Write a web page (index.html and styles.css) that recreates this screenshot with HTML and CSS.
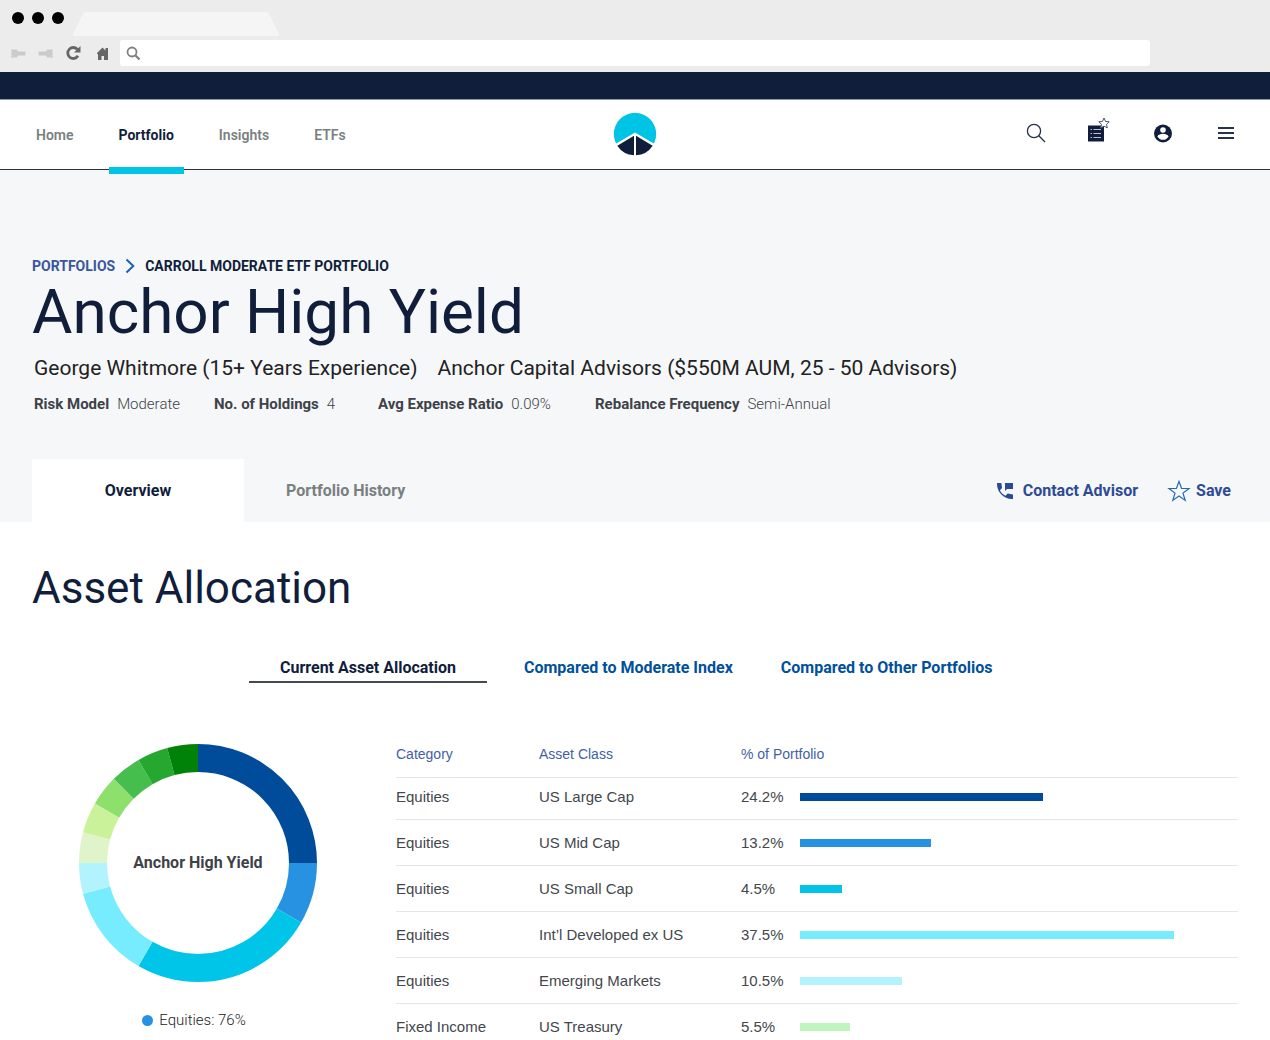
FILE: index.html
```
<!DOCTYPE html>
<html lang="en">
<head>
<meta charset="utf-8">
<meta name="viewport" content="width=device-width, initial-scale=1">
<title>Anchor High Yield</title>
<link rel="stylesheet" href="styles.css">
</head>
<body>
<div class="browser">
  <div class="browser-tabs">
    <div class="window-dots"><span></span><span></span><span></span></div>
    <div class="browser-tab"></div>
  </div>
  <div class="browser-toolbar">
    <div class="browser-buttons">
      <button type="button" aria-label="Back"><svg width="16" height="16" viewBox="0 0 16 16" fill="#cccbcb"><path d="M.5 9L2 7.500L.8 4.500H7l1 2H15.500v4H8l-1 2H.8L2 10z"/></svg></button>
      <button type="button" aria-label="Forward"><svg width="16" height="16" viewBox="0 0 16 16" fill="#cccbcb"><path d="M15.500 9L14 7.500l1.200-3H9l-1 2H.5v4H8l1 2h6.200L14 10z"/></svg></button>
      <button type="button" aria-label="Reload"><svg width="16" height="16" viewBox="0 0 16 16"><path d="M11.600 4.600A5.500 5.500 0 1 0 12 10.800" fill="none" stroke="#666" stroke-width="2.800"/><path d="M14.500 1v6.500H8z" fill="#666"/></svg></button>
      <button type="button" aria-label="Home page"><svg width="16" height="16" viewBox="0 0 16 16" fill="#666"><path d="M8.500 2.500L3 8v1h1v6h3.500v-4h2.500v4H14V3h-2.500v2.500z"/></svg></button>
    </div>
    <label class="address">
      <svg width="15" height="15" viewBox="0 0 15 15" fill="none" stroke="#808080"><circle cx="6" cy="6" r="4.500" stroke-width="1.800"/><path d="M9.300 9.300L13.500 13.500" stroke-width="2.200"/></svg>
      <input type="text" aria-label="Address">
    </label>
  </div>
</div>

<div class="top-strip"></div>
<header class="site-header">
  <nav class="main-nav" aria-label="Main">
    <a href="#">Home</a>
    <a href="#" class="active" aria-current="page">Portfolio</a>
    <a href="#">Insights</a>
    <a href="#">ETFs</a>
  </nav>
  <a href="#" class="logo" aria-label="Start">
    <svg width="44" height="44" viewBox="0 0 44 44"><circle cx="22" cy="22" r="21.200" fill="#00c4e6"/><path d="M1.500 32.500L22 20.500L42.500 32.500V44H1.500z" fill="#fff"/><path d="M21 23.800V43.200A21.200 21.200 0 0 1 4.300 33.700z" fill="#101e3b"/><path d="M23 23.800V43.200A21.200 21.200 0 0 0 39.700 33.700z" fill="#101e3b"/></svg>
  </a>
  <div class="header-tools">
    <button type="button" aria-label="Search"><svg width="24" height="24" viewBox="0 0 24 24" fill="none" stroke="#26324c" stroke-width="1.300"><circle cx="9" cy="10" r="6.600"/><path d="M13.800 14.800L20 21"/></svg></button>
    <button type="button" aria-label="Saved lists"><svg width="24" height="24" viewBox="0 0 24 24"><path fill="#101e3b" d="M0 4.500h16v16H0z"/><path stroke="#b9bfcb" stroke-width="1.200" d="M2.500 8.500H4M5.500 8.500H13M2.500 12.500H4M5.500 12.500H13M2.500 16.500H4M5.500 16.500H13"/><path fill="#fff" stroke="#4c566b" d="M16 -3l1.500 3.400 3.700.4-2.700 2.500.8 3.600L16 5.100l-3.300 1.800.8-3.600-2.700-2.500 3.700-.4z"/></svg></button>
    <button type="button" aria-label="Account"><svg width="24" height="24" viewBox="0 0 24 24"><circle cx="12" cy="12.500" r="9" fill="#101e3b"/><circle cx="12" cy="9" r="2.800" fill="#fff"/><path d="M6.400 15.400c.5-1.900 3.700-2.700 5.600-2.700s5.100.8 5.600 2.700c-1.200 2-3.200 3.400-5.600 3.400s-4.400-1.400-5.600-3.400z" fill="#fff"/></svg></button>
    <button type="button" aria-label="Menu"><svg width="24" height="24" viewBox="0 0 24 24" stroke="#26324c" stroke-width="2"><path d="M4 7h16M4 12h16M4 17h16"/></svg></button>
  </div>
</header>

<section class="hero">
  <nav class="breadcrumb" aria-label="Breadcrumb">
    <a href="#">PORTFOLIOS</a>
    <svg width="10" height="16" viewBox="0 0 10 16" fill="none" stroke="#1a62b3" stroke-width="2"><path d="M1.500 1.500L8.300 8L1.500 14.500"/></svg>
    <span>CARROLL MODERATE ETF PORTFOLIO</span>
  </nav>
  <h1>Anchor High Yield</h1>
  <p class="managers"><span>George Whitmore (15+ Years Experience)</span><span>Anchor Capital Advisors ($550M AUM, 25 - 50 Advisors)</span></p>
  <dl class="facts">
    <div><dt>Risk Model</dt><dd>Moderate</dd></div>
    <div><dt>No. of Holdings</dt><dd>4</dd></div>
    <div><dt>Avg Expense Ratio</dt><dd>0.09%</dd></div>
    <div><dt>Rebalance Frequency</dt><dd>Semi-Annual</dd></div>
  </dl>
  <div class="hero-bar">
    <div class="page-tabs" role="tablist">
      <button type="button" role="tab" aria-selected="true" class="selected">Overview</button>
      <button type="button" role="tab" aria-selected="false">Portfolio History</button>
    </div>
    <div class="actions">
      <button type="button"><svg width="18" height="18" viewBox="0 0 18 18" fill="#2a4b94"><path d="M1 1h4.300l.8 5-2.200 2.200c1 2.300 3.200 4.400 5.600 5.500l2.200-2.200 5.300.9V17C8 17.500.5 10 1 1z"/><path d="M9 1h8v6h-6l-2 2z"/></svg>Contact Advisor</button>
      <button type="button" class="save"><svg width="22" height="22" viewBox="0 0 22 22" fill="none" stroke="#2369b6" stroke-width="1.200"><path d="M11 1.500l2.600 7h7.400l-6 4.600 2.200 7.300-6.200-4.300-6.200 4.300L7 13.100 1 8.500h7.400z"/></svg>Save</button>
    </div>
  </div>
</section>

<main class="allocation">
  <h2>Asset Allocation</h2>
  <div class="view-tabs" role="tablist">
    <button type="button" role="tab" aria-selected="true" class="selected">Current Asset Allocation</button>
    <button type="button" role="tab" aria-selected="false">Compared to Moderate Index</button>
    <button type="button" role="tab" aria-selected="false">Compared to Other Portfolios</button>
  </div>
  <div class="allocation-body">
    <figure class="chart">
      <div class="donut">
        <svg width="240" height="240" viewBox="0 0 240 240" fill="none" stroke-width="28" role="img" aria-label="Asset allocation by class">
          <g transform="rotate(-90 120 120)">
            <circle cx="120" cy="120" r="105" pathLength="360" stroke="#004c9b" stroke-dasharray="90 270"/>
            <circle cx="120" cy="120" r="105" pathLength="360" stroke="#2892e2" stroke-dasharray="30 330" stroke-dashoffset="-90"/>
            <circle cx="120" cy="120" r="105" pathLength="360" stroke="#00c4e8" stroke-dasharray="90 270" stroke-dashoffset="-120"/>
            <circle cx="120" cy="120" r="105" pathLength="360" stroke="#78ecff" stroke-dasharray="45 315" stroke-dashoffset="-210"/>
            <circle cx="120" cy="120" r="105" pathLength="360" stroke="#b3f3fd" stroke-dasharray="15 345" stroke-dashoffset="-255"/>
            <circle cx="120" cy="120" r="105" pathLength="360" stroke="#dff4c8" stroke-dasharray="15 345" stroke-dashoffset="-270"/>
            <circle cx="120" cy="120" r="105" pathLength="360" stroke="#c9f29b" stroke-dasharray="15 345" stroke-dashoffset="-285"/>
            <circle cx="120" cy="120" r="105" pathLength="360" stroke="#8de06c" stroke-dasharray="15 345" stroke-dashoffset="-300"/>
            <circle cx="120" cy="120" r="105" pathLength="360" stroke="#46be4e" stroke-dasharray="15 345" stroke-dashoffset="-315"/>
            <circle cx="120" cy="120" r="105" pathLength="360" stroke="#26a72f" stroke-dasharray="15 345" stroke-dashoffset="-330"/>
            <circle cx="120" cy="120" r="105" pathLength="360" stroke="#008208" stroke-dasharray="15 345" stroke-dashoffset="-345"/>
          </g>
        </svg>
        <strong>Anchor High Yield</strong>
      </div>
      <figcaption><span class="legend-dot"></span>Equities: 76%</figcaption>
    </figure>
    <table class="holdings">
      <colgroup><col class="col-category"><col class="col-class"><col class="col-share"><col></colgroup>
      <thead>
        <tr><th scope="col">Category</th><th scope="col">Asset Class</th><th scope="col" colspan="2">% of Portfolio</th></tr>
      </thead>
      <tbody>
        <tr><td>Equities</td><td>US Large Cap</td><td>24.2%</td><td><div class="bar navy" style="width:55.4%"></div></td></tr>
        <tr><td>Equities</td><td>US Mid Cap</td><td>13.2%</td><td><div class="bar blue" style="width:30%"></div></td></tr>
        <tr><td>Equities</td><td>US Small Cap</td><td>4.5%</td><td><div class="bar cyan" style="width:9.5%"></div></td></tr>
        <tr><td>Equities</td><td>Int’l Developed ex US</td><td>37.5%</td><td><div class="bar sky" style="width:85.5%"></div></td></tr>
        <tr><td>Equities</td><td>Emerging Markets</td><td>10.5%</td><td><div class="bar ice" style="width:23.2%"></div></td></tr>
        <tr><td>Fixed Income</td><td>US Treasury</td><td>5.5%</td><td><div class="bar mint" style="width:11.4%"></div></td></tr>
      </tbody>
    </table>
  </div>
</main>
</body>
</html>
```
FILE: styles.css
```
* { box-sizing: border-box; }
body {
  margin: 0;
  background: #fff;
  color: #101e3b;
  font-family: Roboto, "Liberation Sans", sans-serif;
  font-size: 15px;
  line-height: 20px;
}
button {
  margin: 0;
  padding: 0;
  border: 0;
  background: none;
  color: inherit;
  font: inherit;
  cursor: pointer;
}
a { color: inherit; text-decoration: none; }
svg { display: block; overflow: visible; flex: none; }
h1, h2, p, dl, dd, figure { margin: 0; }

/* Browser frame */
.browser { background: #edecec; }
.browser-tabs {
  display: flex;
  align-items: flex-end;
  height: 36px;
  padding-left: 12px;
}
.window-dots { display: flex; gap: 8px; padding-bottom: 12px; }
.window-dots span { width: 12px; height: 12px; border-radius: 50%; background: #000; }
.browser-tab {
  width: 208px;
  height: 24px;
  margin-left: 8px;
  background: #f5f5f5;
  border-radius: 4px;
  clip-path: polygon(12px 0, 196px 0, 100% 100%, 0 100%);
}
.browser-toolbar {
  display: flex;
  align-items: center;
  gap: 10px;
  height: 36px;
  padding: 0 120px 2px 10px;
}
.browser-buttons { display: flex; gap: 12px; }
.address {
  display: flex;
  flex: 1;
  align-items: center;
  height: 26px;
  padding: 0 6px;
  border-radius: 3px;
  background: #fff;
}
.address input { flex: 1; border: 0; outline: 0; background: none; font: inherit; }

/* Site header */
.top-strip { height: 28px; background: #101e3b; border-bottom: 1px solid #8e96a8; }
.site-header {
  display: grid;
  grid-template-columns: 1fr auto 1fr;
  align-items: center;
  height: 70px;
  padding: 0 26px;
  border-bottom: 1px solid #26324c;
}
.main-nav {
  display: flex;
  gap: 25px;
  align-self: stretch;
  margin-bottom: -5px;
  font-size: 14px;
  font-weight: 600;
  color: #7a8080;
}
.main-nav a { display: flex; align-items: center; padding: 2px 10px 0; border-bottom: 7px solid transparent; }
.main-nav .active { color: #101e3b; font-weight: 700; border-color: #00c4e6; }
.logo { padding-bottom: 1px; }
.header-tools { display: flex; gap: 39px; justify-content: flex-end; padding: 0 6px 4px 0; }

/* Portfolio summary */
.hero { padding: 86px 32px 0; background: #f5f7f9; }
.breadcrumb { display: flex; align-items: center; gap: 10px; font-size: 14px; font-weight: 700; }
.breadcrumb a { color: #3a569f; }
h1 { font-size: 62px; line-height: 72px; font-weight: 400; }
.managers { display: flex; gap: 20px; padding: 6px 2px; font-size: 21px; line-height: 28px; font-weight: 400; color: #222; }
.facts { display: grid; grid-template-columns: 180px 164px 217px auto; justify-content: start; padding: 6px 2px; color: #3e4248; }
.facts div { display: flex; gap: 8px; }
.facts dt { font-weight: 700; }
.facts dd { font-weight: 300; }
.hero-bar {
  display: flex;
  justify-content: space-between;
  align-items: center;
  padding: 39px 7px 0 0;
  font-size: 16px;
  font-weight: 700;
}
.page-tabs { display: flex; color: #7a8080; }
.page-tabs button { height: 63px; padding: 0 42px; }
.page-tabs .selected { width: 212px; background: #fff; color: #101e3b; }
.actions { display: flex; gap: 30px; color: #2f4b93; }
.actions button { display: flex; align-items: center; gap: 9px; }
.actions .save { gap: 6px; }

/* Asset allocation */
.allocation { padding: 38px 32px 0; }
h2 { font-size: 44px; line-height: 56px; font-weight: 400; }
.view-tabs {
  display: flex;
  align-items: flex-start;
  gap: 48px;
  padding: 40px 0 0 217px;
  font-size: 16px;
  font-weight: 700;
  color: #00509c;
}
.view-tabs button { height: 27px; padding-bottom: 3px; }
.view-tabs .selected { width: 238px; margin-right: -11px; padding-bottom: 1px; color: #101e3b; border-bottom: 2px solid #434a50; }
.allocation-body { display: grid; grid-template-columns: 332px 1fr; gap: 32px; padding-top: 60px; }
.chart { display: grid; justify-items: center; align-content: start; gap: 27px; }
.donut { display: grid; place-items: center; font-size: 16px; color: #3e4248; }
.donut > * { grid-area: 1 / 1; }
.chart figcaption { display: flex; align-items: center; gap: 6px; padding-right: 8px; font-weight: 300; color: #222; }
.legend-dot { width: 11px; height: 11px; border-radius: 50%; background: #2892e2; }

.holdings {
  width: 100%;
  table-layout: fixed;
  border-collapse: collapse;
  align-self: start;
  font-family: "Liberation Sans", Arial, sans-serif;
  color: #43474c;
}
.col-category { width: 143px; }
.col-class { width: 202px; }
.col-share { width: 59px; }
.holdings th { height: 34px; padding: 0 0 11px; text-align: left; font-size: 14px; font-weight: 400; color: #435fa5; }
.holdings td { height: 46px; padding: 4px 0 2px; border-top: 1px solid #e3e7e9; line-height: 18px; }
.holdings tbody tr:first-child td { height: 42px; padding-top: 0; }
.holdings tbody tr:last-child td { height: 34px; padding: 14px 0 0; }
.bar { height: 8px; }
.navy { background: #004c9b; }
.blue { background: #2892e2; }
.cyan { background: #00c4e8; }
.sky { background: #78ecff; }
.ice { background: #b3f3fd; }
.mint { background: #bdf5bd; }
```
